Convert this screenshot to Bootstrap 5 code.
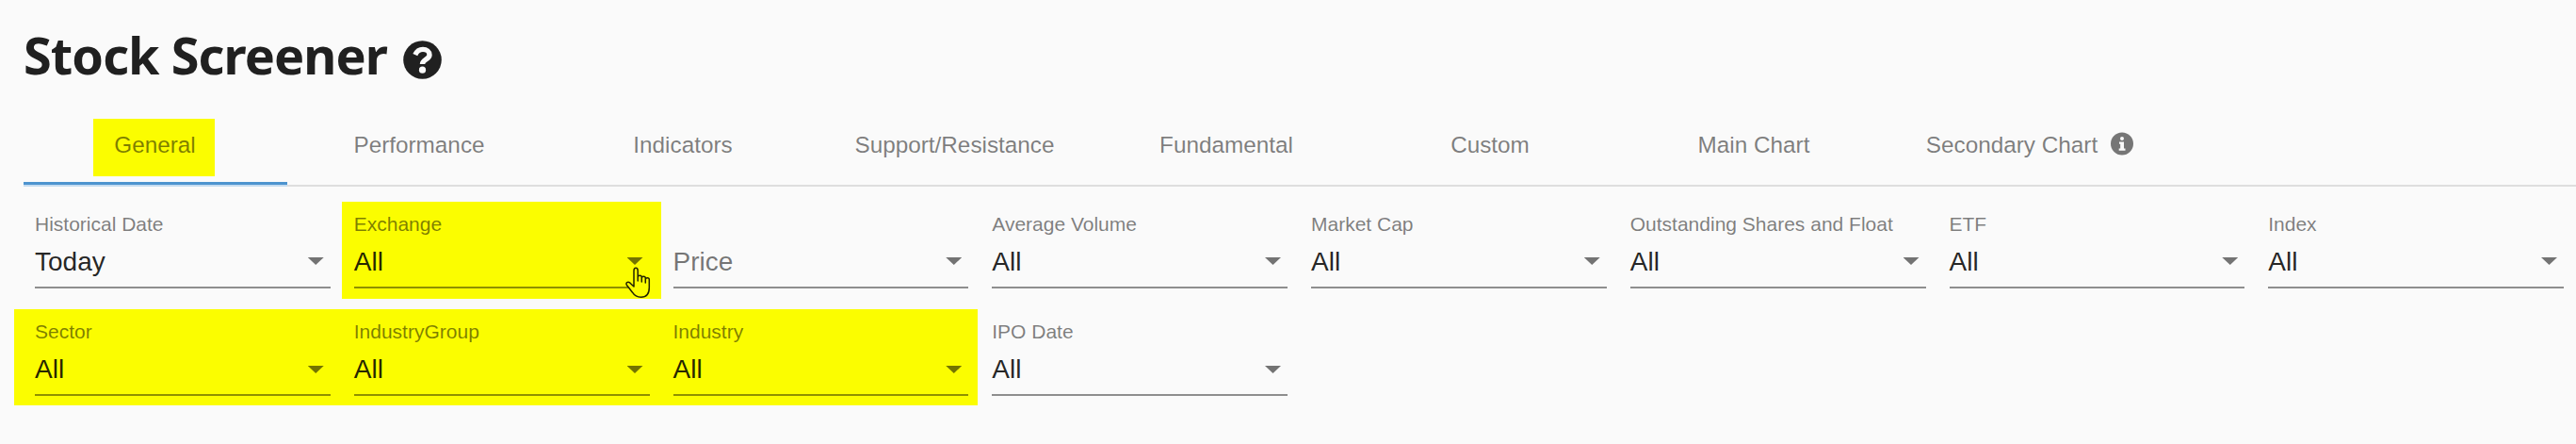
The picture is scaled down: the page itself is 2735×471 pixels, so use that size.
<!DOCTYPE html>
<html lang="en">
<head>
<meta charset="utf-8">
<title>Stock Screener</title>
<link href="https://cdn.jsdelivr.net/npm/bootstrap@5.3.0/dist/css/bootstrap.min.css" rel="stylesheet">
<style>
body{background:#fafafa;color:rgba(0,0,0,.87);font-family:"Liberation Sans",Arial,sans-serif;height:471px;overflow:hidden}
.screen-title{font:700 54px/72px "Noto Sans","Open Sans",sans-serif;margin:0;padding:22px 0 0 25px;height:126px;gap:17px;color:#202020}
.title-text{letter-spacing:-.93px;white-space:nowrap}
.title-icon{width:41px;height:41px;margin-top:20.5px}
.tab-bar{margin-left:25px;height:72px;border-bottom:2px solid #dedede}
.tab-item{width:280px;height:72px;font-size:24.3px;line-height:36px;padding:10px 0 0;color:rgba(0,0,0,.5);white-space:nowrap;border-radius:0}
.tab-item.active{border-bottom:3px solid #4d94cf;box-shadow:0 2px 0 #c5dcf0;height:70px;padding-top:0;padding-right:3px;color:rgba(0,0,0,.5)}
.tab-item.wide{width:297px}
.tab-item.with-info{width:306px}
.marker{background:#fbfd00}
.tab-label{padding:10px 20px 0 22px;height:61px}
.info-icon{width:24px;height:25px;margin:4px 0 0 14px}
.filters{display:grid;grid-template-columns:repeat(8,338.75px);row-gap:11px;padding:16px 0 0 24.5px}
.filter{height:103px;padding:12px 12.5px 0}
.filter-label{font-size:21px;line-height:24px;height:35px;color:rgba(0,0,0,.5);white-space:nowrap}
.filter-value{font-size:28px;line-height:33px;height:45px;padding-right:7px;border-bottom:2px solid rgba(0,0,0,.43)}
.filter-value.empty{color:rgba(0,0,0,.54)}
.caret{width:17px;height:8px;background:rgba(0,0,0,.54);clip-path:polygon(0 0,100% 0,50% 100%);margin-top:12px}
.second{height:102px}
.second .caret{margin-top:13px}
.group-start{margin-left:-9.5px;padding-left:22px}
.group-end{margin-right:3px;padding-right:9.5px}
.pointer{left:301px;top:69px;width:27px;height:34px}
</style>
</head>
<body>
<h1 class="screen-title d-flex align-items-start"><span class="title-text">Stock Screener</span>
<svg class="title-icon" viewBox="0 0 41 41"><circle cx="20.5" cy="20.5" r="20.3" fill="#202020"/><path d="M12.8 15.2C14.8 10.8 17.7 9.4 21 9.4C25 9.4 28 11.8 28 15.2C28 20.2 20.5 19.8 20.5 25" fill="none" stroke="#fafafa" stroke-width="5.4"/><circle cx="20.5" cy="31.2" r="3.6" fill="#fafafa"/></svg></h1>
<nav class="nav tab-bar flex-nowrap">
<a class="nav-link tab-item active d-flex justify-content-center"><span class="marker tab-label">General</span></a>
<a class="nav-link tab-item text-center">Performance</a>
<a class="nav-link tab-item text-center">Indicators</a>
<a class="nav-link tab-item wide text-center">Support/Resistance</a>
<a class="nav-link tab-item text-center">Fundamental</a>
<a class="nav-link tab-item text-center">Custom</a>
<a class="nav-link tab-item text-center">Main Chart</a>
<a class="nav-link tab-item with-info d-flex justify-content-center"><span>Secondary Chart</span><svg class="info-icon" viewBox="0 0 24 24"><circle cx="12" cy="12" r="12" fill="#767676"/><circle cx="12" cy="6.5" r="2" fill="#fafafa"/><path d="M9 10h5v7h1.5v2.3H8.7V17h1.5v-4.7H9z" fill="#fafafa"/></svg></a>
</nav>
<main class="filters">
<div class="filter"><div class="filter-label">Historical Date</div><div class="filter-value d-flex justify-content-between">Today<i class="caret"></i></div></div>
<div class="filter marker position-relative"><div class="filter-label">Exchange</div><div class="filter-value d-flex justify-content-between">All<i class="caret"></i></div>
<svg class="pointer position-absolute" viewBox="0 0 27 34"><path d="M9 21V4.2C9 .2 13.2.2 13.2 4.2V15V11.2C13.2 8.5 17.3 8.5 17.3 11.2V16V12C17.3 9.5 21.3 9.5 21.3 12V17V13.5C21.3 11 25.3 11 25.3 13.5V22C25.3 28.5 22 32.3 16.5 32.3C12 32.3 9.5 30.5 7.5 27.2L1.5 19.5C-.2 17 2.5 15.3 5 17.2Z" fill="#fbfd00" stroke="#222200" stroke-width="1.5" stroke-linejoin="round"/></svg></div>
<div class="filter"><div class="filter-label"></div><div class="filter-value empty d-flex justify-content-between">Price<i class="caret"></i></div></div>
<div class="filter"><div class="filter-label">Average Volume</div><div class="filter-value d-flex justify-content-between">All<i class="caret"></i></div></div>
<div class="filter"><div class="filter-label">Market Cap</div><div class="filter-value d-flex justify-content-between">All<i class="caret"></i></div></div>
<div class="filter"><div class="filter-label">Outstanding Shares and Float</div><div class="filter-value d-flex justify-content-between">All<i class="caret"></i></div></div>
<div class="filter"><div class="filter-label">ETF</div><div class="filter-value d-flex justify-content-between">All<i class="caret"></i></div></div>
<div class="filter"><div class="filter-label">Index</div><div class="filter-value d-flex justify-content-between">All<i class="caret"></i></div></div>
<div class="filter second marker group-start"><div class="filter-label">Sector</div><div class="filter-value d-flex justify-content-between">All<i class="caret"></i></div></div>
<div class="filter second marker"><div class="filter-label">IndustryGroup</div><div class="filter-value d-flex justify-content-between">All<i class="caret"></i></div></div>
<div class="filter second marker group-end"><div class="filter-label">Industry</div><div class="filter-value d-flex justify-content-between">All<i class="caret"></i></div></div>
<div class="filter second"><div class="filter-label">IPO Date</div><div class="filter-value d-flex justify-content-between">All<i class="caret"></i></div></div>
</main>
<script src="https://cdn.jsdelivr.net/npm/bootstrap@5.3.0/dist/js/bootstrap.bundle.min.js"></script>
</body>
</html>
